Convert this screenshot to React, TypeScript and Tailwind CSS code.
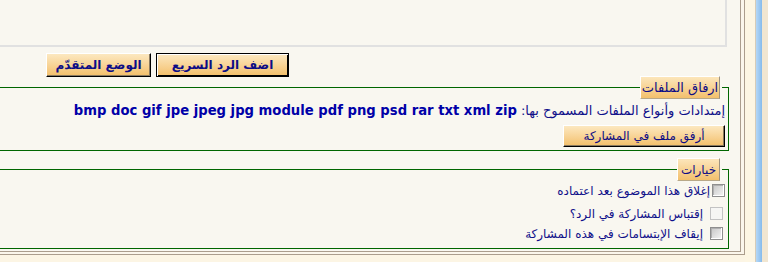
import React from 'react';

const arabic = { fontFamily: '"DejaVu Sans", "Noto Sans", sans-serif' };

function OrangeButton({
  label,
  width,
  bold,
  isDefault,
}: {
  label: string;
  width: string;
  bold?: boolean;
  isDefault?: boolean;
}) {
  const frame = isDefault
    ? 'border border-black shadow-[inset_1px_1px_0_#ffffff,inset_-1px_-1px_0_#000000]'
    : 'border border-t-white border-l-white border-r-black border-b-black shadow-[inset_-1px_-1px_0_#8a7a60]';
  return (
    <div
      dir="rtl"
      style={arabic}
      className={`${width} flex h-full items-center justify-center bg-linear-to-b from-[#fce8c0] to-[#f3bf69] text-[12px] leading-none text-[#0c0c86] ${frame} ${bold ? 'font-bold' : ''}`}
    >
      {label}
    </div>
  );
}

function Legend({ label, width, size }: { label: string; width: string; size: string }) {
  return (
    <div className="absolute right-[6px] top-[-12px] bg-[#f9f7f0] pr-[2px]">
      <div
        style={arabic}
        className={`${width} ${size} flex h-[23px] items-center justify-center border border-t-white border-l-white border-r-[#9c9282] border-b-[#b8a888] bg-linear-to-b from-[#fce6bb] to-[#f3c06c] leading-none text-[#0c0c86]`}
      >
        {label}
      </div>
    </div>
  );
}

function Check({ light }: { light?: boolean }) {
  return light ? (
    <span className="block h-[13px] w-[13px] shrink-0 border border-[#c3c3c3] bg-[#f6f6f4]" />
  ) : (
    <span className="block h-[13px] w-[13px] shrink-0 border border-[#8e8e8e] bg-linear-to-br from-[#c6c6c6] to-[#f6f6f6] shadow-[inset_-1px_-1px_0_#ffffff,inset_1px_1px_0_#b0b0b0]" />
  );
}

export default function App() {
  return (
    <div className="flex h-[262px] w-[768px] overflow-hidden bg-[#fcf5e4]">
      {/* framed page area */}
      <div className="h-[255px] w-[745px] shrink-0 border-r border-b border-[#ab9d8c] bg-[#fbf6eb] pr-[3px] pb-[2px]">
        <div className="flex h-full flex-col border-r border-b border-[#ab9d8c] bg-[#f9f7f0]">
          {/* editor frame */}
          <div className="h-[47px] w-[727px] shrink-0 border-r-2 border-b-2 border-[#e1e1e1]" />

          {/* buttons */}
          <div className="mt-[6px] flex h-[24px] gap-[5px] pl-[46px]">
            <OrangeButton label="الوضع المتقدّم" width="w-[105px]" bold />
            <OrangeButton label="اضف الرد السريع" width="w-[133px]" bold isDefault />
          </div>

          {/* attachments */}
          <div
            dir="rtl"
            className="relative mt-[10px] w-[729px] border-t border-r border-b border-[#006600] pt-[15px] pr-[3px] pb-[3px]"
          >
            <Legend label="ارفاق الملفات" width="w-[80px]" size="text-[13px]" />
            <div className="flex h-[16px] items-baseline leading-[16px] whitespace-nowrap">
              <span style={arabic} className="text-[13px] text-[#10108a]">
                إمتدادات وأنواع الملفات المسموح بها:
              </span>
              <span
                dir="ltr"
                style={{ fontFamily: '"DejaVu Sans", Verdana, sans-serif' }}
                className="mr-[4px] text-[13.2px] font-bold text-[#0000a8]"
              >
                bmp doc gif jpe jpeg jpg module pdf png psd rar txt xml zip
              </span>
            </div>
            <div className="mt-[6px] flex h-[22px]">
              <OrangeButton label="أرفق ملف في المشاركة" width="w-[162px]" />
            </div>
          </div>

          {/* options */}
          <div
            dir="rtl"
            className="relative mt-[18px] w-[729px] border-t border-r border-b border-[#006600] pt-[13px] pb-[7px]"
          >
            <Legend label="خيارات" width="w-[43px]" size="text-[12px]" />
            <div style={arabic} className="text-[12px] leading-none text-[#10108a]">
              <label className="flex h-[15px] items-center gap-[2px] pr-[3px]">
                <Check />
                <span>إغلاق هذا الموضوع بعد اعتماده</span>
              </label>
              <label className="mt-[8px] flex h-[15px] items-center gap-[7px] pr-[5px]">
                <Check light />
                <span>إقتباس المشاركة في الرد؟</span>
              </label>
              <label className="mt-[5px] flex h-[15px] items-center gap-[7px] pr-[5px]">
                <Check />
                <span>إيقاف الإبتسامات في هذه المشاركة</span>
              </label>
            </div>
          </div>
        </div>
      </div>

      {/* window edge */}
      <div className="w-[10px] shrink-0 bg-[#fdf6e3]" />
      <div className="w-[1px] shrink-0 bg-[#d6ccb8]" />
      <div className="w-[6px] shrink-0 bg-linear-to-r from-[#b6d8f6] to-[#86bbec]" />
      <div className="flex-1 bg-[#f1e6d1]" />
    </div>
  );
}
